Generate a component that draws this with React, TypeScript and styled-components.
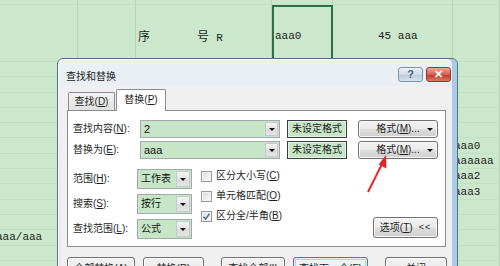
import React from 'react';
import styled, { createGlobalStyle, css } from 'styled-components';

const UI_FONT = '"Liberation Sans", "Noto Sans CJK SC", sans-serif';

const GlobalStyle = createGlobalStyle`
  html, body { margin: 0; padding: 0; }
  body {
    width: 500px; height: 266px; overflow: hidden;
    background: #cce8cc;
    font-family: ${UI_FONT};
  }
  u { text-decoration-thickness: 1px; text-underline-offset: 1px; }
`;

const Stage = styled.div`
  position: relative;
  width: 500px;
  height: 266px;
  overflow: hidden;
`;

/* ---------- spreadsheet ---------- */
const Sheet = styled.div`
  display: grid;
  grid-template-columns: 78px 58px 136px 61px 120px 47px;
  grid-template-rows: 5px 57px repeat(14, 15.3px);
  font-family: "Liberation Mono", "Noto Sans CJK SC", monospace;
  font-size: 11px;
  color: #1c1c1c;
`;

const Cell = styled.div<{ $pad?: number; $sel?: boolean }>`
  box-sizing: border-box;
  border-right: 1px solid #b6d5b6;
  border-bottom: 1px solid #c2dfc2;
  display: flex;
  align-items: center;
  padding-left: ${(p) => p.$pad ?? 0}px;
  white-space: nowrap;
  min-width: 0;
  ${(p) =>
    p.$sel &&
    css`
      border: 2px solid #2f6e3e;
      padding-left: 1px;
    `}
`;

const HeadPair = styled.div`
  display: flex;
  gap: 47px;
  font-size: 12px;
  padding-top: 5px;
`;

const SheetText = styled.span<{ $shift?: number; $top?: number }>`
  margin-left: ${(p) => p.$shift ?? 0}px;
  padding-top: ${(p) => p.$top ?? 0}px;
`;

const Mono = styled.span`
  font-family: "Liberation Mono", monospace;
  font-size: 11px;
`;

/* ---------- dialog ---------- */
const Dialog = styled.div`
  position: absolute;
  left: 57px;
  top: 58px;
  width: 401px;
  height: 240px;
  box-sizing: border-box;
  border: 1px solid #5a6f82;
  border-radius: 6px 6px 0 0;
  background: linear-gradient(#ebf0f5, #e1e8ef);
  box-shadow: inset -5px 0 0 #a9cbe6, inset 1px 1px 0 #f8fafc;
  display: flex;
  flex-direction: column;
  font-family: ${UI_FONT};
  font-size: 10px;
  color: #1e1e1e;
`;

const TitleBar = styled.div`
  height: 27px;
  box-sizing: border-box;
  padding: 3px 6px 0 8px;
  display: flex;
  align-items: center;
`;

const Title = styled.span`
  flex: 1;
  font-size: 10px;
  color: #222;
  padding-top: 3px;
`;

const CaptionBtn = styled.div<{ $close?: boolean }>`
  width: 25px;
  height: 15px;
  box-sizing: border-box;
  border-radius: 3px;
  display: flex;
  align-items: center;
  justify-content: center;
  font-family: "Liberation Sans", sans-serif;
  font-weight: bold;
  font-size: 11px;
  line-height: 1;
  & + & { margin-left: 3px; }
  ${(p) =>
    p.$close
      ? css`
          border: 1px solid #8c3a34;
          background: linear-gradient(#e9a99b, #d4604f 50%, #c43a2c 55%, #d97a6a);
          color: #fff;
        `
      : css`
          border: 1px solid #7d93a8;
          background: linear-gradient(#eef3f8, #cfdbe7 50%, #bccbdb 55%, #d8e3ee);
          color: #4d6378;
        `}
`;

const Client = styled.div`
  flex: 1;
  margin: 0 5px 0 3px;
  background: #f0f0f0;
  padding: 3px 6px 0 6px;
  display: flex;
  flex-direction: column;
`;

const TabStrip = styled.div`
  display: flex;
  align-items: flex-end;
  height: 21px;
  padding-left: 1px;
  position: relative;
  z-index: 1;
`;

const Tab = styled.div<{ $active?: boolean; $w: number }>`
  width: ${(p) => p.$w}px;
  box-sizing: border-box;
  border: 1px solid #898c95;
  border-bottom: none;
  border-radius: 2px 2px 0 0;
  display: flex;
  align-items: center;
  justify-content: center;
  line-height: 1;
  ${(p) =>
    p.$active
      ? css`
          height: 22px;
          margin-bottom: -1px;
          background: #fff;
          padding-bottom: 2px;
        `
      : css`
          height: 18px;
          background: linear-gradient(#f3f3f3, #e1e1e1);
          margin-right: 1px;
        `}
`;

const Panel = styled.div`
  height: 137px;
  box-sizing: border-box;
  background: #fff;
  border: 1px solid #898c95;
  padding: 9px 6px 0 5px;
  display: flex;
  flex-direction: column;
`;

const FieldRow = styled.div`
  display: flex;
  align-items: center;
  height: 18px;
  & + & { margin-top: 3px; }
`;

const Label = styled.div<{ $w: number }>`
  width: ${(p) => p.$w}px;
  flex-shrink: 0;
  white-space: nowrap;
  line-height: 1;
`;

const Combo = styled.div<{ $w: number; $h: number }>`
  width: ${(p) => p.$w}px;
  height: ${(p) => p.$h}px;
  box-sizing: border-box;
  border: 1px solid #a4a9ae;
  background: #c7e6c7;
  display: flex;
  align-items: stretch;
  flex-shrink: 0;
`;

const ComboText = styled.div<{ $latin?: boolean }>`
  flex: 1;
  display: flex;
  align-items: center;
  padding-left: 3px;
  font-size: ${(p) => (p.$latin ? 11 : 10)}px;
  color: #111;
  line-height: 1;
  white-space: nowrap;
`;

const DropBtn = styled.div<{ $w: number }>`
  width: ${(p) => p.$w}px;
  margin: 1px;
  box-sizing: border-box;
  border: 1px solid #c4c7cb;
  background: linear-gradient(#f4f4f4, #e4e4e4 50%, #d9d9d9 55%, #e8e8e8);
  display: flex;
  align-items: center;
  justify-content: center;
`;

const Caret = styled.span`
  width: 0;
  height: 0;
  border-left: 3px solid transparent;
  border-right: 3px solid transparent;
  border-top: 3px solid #111;
`;

const FormatState = styled.div`
  width: 60px;
  height: 18px;
  margin-left: 7px;
  box-sizing: border-box;
  border: 1px solid #3c3c3c;
  box-shadow: inset 0 0 0 1px #e6f3e6;
  background: #c7e6c7;
  display: flex;
  align-items: center;
  justify-content: center;
  flex-shrink: 0;
  line-height: 1;
  white-space: nowrap;
`;

const btnFace = css`
  box-sizing: border-box;
  border: 1px solid #707070;
  border-radius: 3px;
  background: linear-gradient(#f2f2f2 0%, #ebebeb 48%, #dddddd 52%, #cfcfcf 100%);
  box-shadow: inset 0 0 0 1px #fbfbfb;
  font-size: 10px;
  color: #1e1e1e;
  line-height: 1;
  padding: 0;
  display: flex;
  align-items: center;
  flex-shrink: 0;
  white-space: nowrap;
`;

const MenuButton = styled.div`
  ${btnFace};
  width: 80px;
  height: 18px;
  margin-left: 11px;
  padding: 0 4px 0 10px;
`;

const MenuText = styled.span`
  flex: 1;
  text-align: center;
`;

const Lower = styled.div`
  display: flex;
  margin-top: 10px;
  height: 70px;
`;

const SelectCol = styled.div`
  display: flex;
  flex-direction: column;
  gap: 5px;
`;

const SelectRow = styled.div`
  display: flex;
  align-items: center;
  height: 20px;
`;

const CheckCol = styled.div`
  display: flex;
  flex-direction: column;
  margin-left: 9px;
  margin-top: -3px;
`;

const CheckRow = styled.div`
  display: flex;
  align-items: center;
  height: 20px;
  gap: 4px;
  white-space: nowrap;
  line-height: 1;
`;

const Box = styled.span`
  width: 11px;
  height: 11px;
  box-sizing: border-box;
  border: 1px solid #9a9a9a;
  background: linear-gradient(135deg, #dcdcdc, #fbfbfb);
  box-shadow: inset 0 0 0 1px #f4f4f4;
  display: flex;
  align-items: center;
  justify-content: center;
`;

const OptionsButton = styled.div`
  ${btnFace};
  width: 65px;
  height: 21px;
  margin-left: auto;
  margin-right: 1px;
  align-self: flex-end;
  margin-bottom: 1px;
  justify-content: center;
  gap: 6px;
`;

const Chevrons = styled.span`
  font-size: 9px;
  letter-spacing: 1px;
`;

const ButtonBar = styled.div`
  display: flex;
  margin-top: 10px;
`;

const DlgButton = styled.div<{ $w: number; $gap: number; $default?: boolean }>`
  ${btnFace};
  width: ${(p) => p.$w}px;
  height: 23px;
  margin-left: ${(p) => p.$gap}px;
  justify-content: center;
  align-items: flex-start;
  padding-top: 6px;
  ${(p) =>
    p.$default &&
    css`
      border-color: #3c7fb1;
      box-shadow: inset 0 0 0 1px #dff1fc, inset 0 0 0 2px #a9daf5;
      background: linear-gradient(#eef7fd 0%, #e3f1fb 48%, #cfe8f8 52%, #bde0f6 100%);
    `}
`;

const ArrowLayer = styled.svg`
  position: absolute;
  left: 0;
  top: 0;
  pointer-events: none;
`;

type SheetCell = { row: number; col: number; node?: React.ReactNode; pad?: number; sel?: boolean };

const cols = 6;
const rows = 16;

const contents: SheetCell[] = [
  {
    row: 1,
    col: 2,
    pad: 2,
    node: (
      <HeadPair>
        <span>序</span>
        <span>
          号 <Mono>R</Mono>
        </span>
      </HeadPair>
    ),
  },
  { row: 1, col: 3, sel: true, node: <SheetText $top={5}>aaa0</SheetText> },
  { row: 1, col: 4, pad: 45, node: <SheetText $top={5}>45 aaa</SheetText> },
  { row: 7, col: 5, pad: 1, node: <SheetText>aaa0</SheetText> },
  { row: 8, col: 5, pad: 1, node: <SheetText>aaaaaa</SheetText> },
  { row: 9, col: 5, pad: 1, node: <SheetText>aaa2</SheetText> },
  { row: 10, col: 5, pad: 1, node: <SheetText>aaa3</SheetText> },
  { row: 13, col: 0, node: <SheetText $shift={-4}>aaa/aaa</SheetText> },
];

function findCell(r: number, c: number) {
  return contents.find((x) => x.row === r && x.col === c);
}

const Check = () => (
  <svg width="9" height="9" viewBox="0 0 9 9">
    <path d="M1.5 4.8 L3.6 7 L7.6 1.6" fill="none" stroke="#4a6fa8" strokeWidth="1.5" />
  </svg>
);

const ComboBox = ({ w, h, text, latin, btn }: { w: number; h: number; text: string; latin?: boolean; btn: number }) => (
  <Combo $w={w} $h={h}>
    <ComboText $latin={latin}>{text}</ComboText>
    <DropBtn $w={btn}>
      <Caret />
    </DropBtn>
  </Combo>
);

export default function App() {
  return (
    <>
      <GlobalStyle />
      <Stage>
        <Sheet>
          {Array.from({ length: rows * cols }).map((_, i) => {
            const r = Math.floor(i / cols);
            const c = i % cols;
            const cell = findCell(r, c);
            return (
              <Cell key={i} $pad={cell?.pad} $sel={cell?.sel}>
                {cell?.node}
              </Cell>
            );
          })}
        </Sheet>

        <Dialog>
          <TitleBar>
            <Title>查找和替换</Title>
            <CaptionBtn>?</CaptionBtn>
            <CaptionBtn $close>✕</CaptionBtn>
          </TitleBar>
          <Client>
            <TabStrip>
              <Tab $w={47}>
                <span>
                  查找(<u>D</u>)
                </span>
              </Tab>
              <Tab $w={50} $active>
                <span>
                  替换(<u>P</u>)
                </span>
              </Tab>
            </TabStrip>
            <Panel>
              <FieldRow>
                <Label $w={67}>
                  查找内容(<u>N</u>):
                </Label>
                <ComboBox w={140} h={18} text="2" latin btn={13} />
                <FormatState>未设定格式</FormatState>
                <MenuButton>
                  <MenuText>
                    格式(<u>M</u>)...
                  </MenuText>
                  <Caret />
                </MenuButton>
              </FieldRow>
              <FieldRow>
                <Label $w={67}>
                  替换为(<u>E</u>):
                </Label>
                <ComboBox w={140} h={18} text="aaa" latin btn={13} />
                <FormatState>未设定格式</FormatState>
                <MenuButton>
                  <MenuText>
                    格式(<u>M</u>)...
                  </MenuText>
                  <Caret />
                </MenuButton>
              </FieldRow>

              <Lower>
                <SelectCol>
                  <SelectRow>
                    <Label $w={64}>
                      范围(<u>H</u>):
                    </Label>
                    <ComboBox w={55} h={20} text="工作表" btn={14} />
                  </SelectRow>
                  <SelectRow>
                    <Label $w={64}>
                      搜索(<u>S</u>):
                    </Label>
                    <ComboBox w={55} h={20} text="按行" btn={14} />
                  </SelectRow>
                  <SelectRow>
                    <Label $w={64}>
                      查找范围(<u>L</u>):
                    </Label>
                    <ComboBox w={55} h={20} text="公式" btn={14} />
                  </SelectRow>
                </SelectCol>
                <CheckCol>
                  <CheckRow>
                    <Box />
                    <span>
                      区分大小写(<u>C</u>)
                    </span>
                  </CheckRow>
                  <CheckRow>
                    <Box />
                    <span>
                      单元格匹配(<u>O</u>)
                    </span>
                  </CheckRow>
                  <CheckRow>
                    <Box>
                      <Check />
                    </Box>
                    <span>
                      区分全/半角(<u>B</u>)
                    </span>
                  </CheckRow>
                </CheckCol>
                <OptionsButton>
                  <span>
                    选项(<u>T</u>)
                  </span>
                  <Chevrons>&lt;&lt;</Chevrons>
                </OptionsButton>
              </Lower>
            </Panel>
            <ButtonBar>
              <DlgButton $w={68} $gap={0}>
                <span>
                  全部替换(<u>A</u>)
                </span>
              </DlgButton>
              <DlgButton $w={61} $gap={8}>
                <span>
                  替换(<u>R</u>)
                </span>
              </DlgButton>
              <DlgButton $w={64} $gap={17}>
                <span>
                  查找全部(<u>I</u>)
                </span>
              </DlgButton>
              <DlgButton $w={75} $gap={8} $default>
                <span>
                  查找下一个(<u>F</u>)
                </span>
              </DlgButton>
              <DlgButton $w={62} $gap={17}>
                <span>关闭</span>
              </DlgButton>
            </ButtonBar>
          </Client>
        </Dialog>

        <ArrowLayer width="500" height="266" viewBox="0 0 500 266">
          <line x1="368" y1="192" x2="382.5" y2="163" stroke="#e3222b" strokeWidth="2" />
          <polygon points="386,155 378.6,164.6 386.4,168.4" fill="#e3222b" />
        </ArrowLayer>
      </Stage>
    </>
  );
}
